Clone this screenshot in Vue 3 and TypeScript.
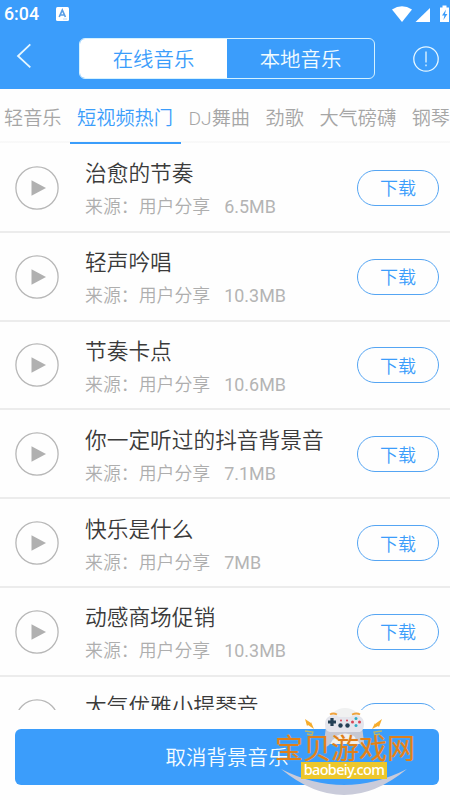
<script setup lang="ts">
import { ref } from 'vue'

interface Track {
  title: string
  size: string
}

const categories: string[] = ['轻音乐', '短视频热门', 'DJ舞曲', '劲歌', '大气磅礴', '钢琴']
const activeCategory = ref('短视频热门')
const source = ref<'online' | 'local'>('online')

const tracks: Track[] = [
  { title: '治愈的节奏', size: '6.5MB' },
  { title: '轻声吟唱', size: '10.3MB' },
  { title: '节奏卡点', size: '10.6MB' },
  { title: '你一定听过的抖音背景音', size: '7.1MB' },
  { title: '快乐是什么', size: '7MB' },
  { title: '动感商场促销', size: '10.3MB' },
  { title: '大气优雅小提琴音', size: '' },
]
</script>

<template>
  <div class="screen">
    <header class="header">
      <div class="status">
        <span class="clock">6:04</span>
        <svg class="badge" viewBox="0 0 13 14">
          <rect width="13" height="14" rx="1.5" fill="#fff" />
          <path d="M3.2 10 6.3 3 9.4 10M4.3 8h4" fill="none" stroke="#5b9fe6" stroke-width="1.7" />
          <path d="M7 12h4" stroke="#b6d8fa" />
        </svg>
        <svg class="signals" viewBox="0 0 60 20">
          <path d="M2 4.5Q12 -2 22 4.5L12 17Z" fill="#fff" />
          <path d="M25.5 17 40 3V17Z" fill="#fff" />
          <path d="M50 2.5h2.5V.5h4v2H59V17H50Z" fill="#fff" />
          <path d="m56 4.5-4 6h2.4l-1 4.5 4-6H55Z" fill="#3b9dfb" />
        </svg>
      </div>
      <div class="nav">
        <svg class="back" viewBox="0 0 16 26"><path d="M14.3 1.4 2 13l12.3 11.4" /></svg>
        <div class="switcher">
          <button :class="{ on: source === 'online' }" @click="source = 'online'">在线音乐</button>
          <button :class="{ on: source === 'local' }" @click="source = 'local'">本地音乐</button>
        </div>
        <svg class="info" viewBox="0 0 28 28">
          <circle cx="14" cy="14" r="12.2" />
          <path d="M14 6.5v11M14 19.5v1.8" />
        </svg>
      </div>
    </header>

    <nav class="tabs">
      <button
        v-for="name in categories"
        :key="name"
        :class="{ active: name === activeCategory }"
        @click="activeCategory = name"
      >{{ name }}</button>
    </nav>

    <main class="list">
      <article v-for="track in tracks" :key="track.title" class="track">
        <svg class="play" viewBox="0 0 44 44">
          <circle cx="22" cy="22" r="21.1" />
          <path d="M16.5 14.3 31 22 16.5 29.7Z" />
        </svg>
        <div class="meta">
          <h3>{{ track.title }}</h3>
          <p><template v-if="track.size"><span>来源：用户分享</span><span class="size">{{ track.size }}</span></template></p>
        </div>
        <button class="download"><template v-if="track.size">下载</template></button>
      </article>
    </main>

    <footer class="footer">
      <button class="cancel">取消背景音乐</button>
    </footer>

    <div class="watermark">
      <svg class="mascot" viewBox="0 0 150 94">
        <circle cx="75" cy="19" r="17" fill="#f0f1f1" />
        <path d="M11 63Q74 95 137 63Q74 115 11 63Z" fill="#c9cbda" />
        <path d="M56 20 54 37Q55 44 60 38L66 30Q75 25 84 30L90 38Q95 44 94 36L92 20Z" fill="#c6c8d3" />
        <path d="M60 38Q64 29 75 29Q86 29 90 38Z" fill="#f0f1f1" />
        <path d="M60 10Q65 8 69 11H80Q84 8 89 10Q94 12 94 18Q94 24 90 26H60Q55 25 55 18Q55 12 60 10Z" fill="#e4e5ec" />
        <path d="M60 8.5Q63 6.5 67 8.5M82 8.5Q87 6.5 90 8.5" stroke="#efa33d" stroke-width="1.8" fill="none" />
        <path d="M62 12v8M58 16h8" stroke="#234055" stroke-width="3.2" />
        <g fill="#234055"><circle cx="70.5" cy="19.5" r="2.2" /><circle cx="77.5" cy="19.5" r="2.2" /></g>
        <g fill="#d84555"><circle cx="82.5" cy="16" r="1.5" /><circle cx="89.5" cy="16" r="1.5" /><circle cx="71" cy="14.5" r="1" /><circle cx="77" cy="14.5" r="1" /></g>
        <g fill="#2eabc5"><circle cx="86" cy="12.5" r="1.5" /><circle cx="86" cy="19.5" r="1.5" /></g>
        <path d="m35 13 6 4v-1l3 7-6-4-1 1ZM112 13l-7 5v-1l-3 6 6-3 1 1Z" fill="#f6ad2d" />
        <path d="m35 25 8 1-1 3-5-1M112 25l-8 1 1 3 5-1" fill="none" stroke="#bdb866" stroke-width="1.3" />
      </svg>
      <span class="site-name">宝贝游戏网</span>
      <span class="site-url">baobeiy.com</span>
    </div>
  </div>
</template>

<style>
body {
  margin: 0;
  overflow: hidden;
}
</style>

<style scoped>
.screen {
  position: relative;
  display: flex;
  flex-direction: column;
  width: 450px;
  height: 800px;
  overflow: hidden;
  background: #fefefe;
  font-family: Roboto, 'Noto Sans CJK SC', sans-serif;
  font-weight: 350;
}
button {
  padding: 0;
  border: 0;
  background: none;
  font-family: inherit;
  font-weight: inherit;
  white-space: nowrap;
}
.header {
  flex: 0 0 89px;
  background: #3b9dfb;
}
.status {
  display: flex;
  align-items: center;
  height: 28px;
  padding-left: 4px;
}
.clock {
  width: 52px;
  color: #fff;
  font-size: 17.8px;
  font-weight: 500;
  line-height: 28px;
}
.badge {
  width: 13px;
  height: 14px;
}
.signals {
  width: 60px;
  height: 20px;
  margin: 0 0 0 auto;
  transform: translateY(1px);
}
.nav {
  display: flex;
  align-items: center;
  height: 61px;
  padding: 0 10px 0 16px;
}
.back {
  width: 16px;
  height: 26px;
  margin-bottom: 5px;
}
.back path,
.info circle,
.info path {
  fill: none;
  stroke: #e6f7ff;
  stroke-width: 1.3;
}
.back path {
  stroke-width: 1.8;
}
.switcher {
  display: flex;
  box-sizing: border-box;
  width: 296px;
  height: 41px;
  margin-left: 47px;
  overflow: hidden;
  border: 1.5px solid #d5f2ff;
  border-radius: 6px;
}
.switcher button {
  flex: 1;
  padding-top: 3px;
  color: #f0fbff;
  font-size: 20.4px;
  line-height: 36px;
}
.switcher .on {
  color: #3b9dfb;
  background: #fff;
}
.info {
  width: 28px;
  height: 28px;
  margin-left: auto;
}
.tabs {
  display: flex;
  flex: 0 0 55px;
  box-sizing: border-box;
  width: 520px;
  padding-left: 4px;
  background: linear-gradient(#fefefe 0 52px, #f3f3f3 53px, #fefefe 54px);
}
.tabs button {
  position: relative;
  margin-right: 15.5px;
  padding-top: 4px;
  color: #a6a6a6;
  font-size: 19.2px;
  line-height: 51px;
}
.tabs .active {
  color: #3b9dfb;
}
.tabs .active::after {
  position: absolute;
  right: -8px;
  bottom: 0;
  left: -7.5px;
  height: 2px;
  background: #3b9dfb;
  content: '';
}
.list {
  flex: 0 0 566px;
  overflow: hidden;
}
.track {
  display: flex;
  align-items: center;
  box-sizing: border-box;
  height: 88.8px;
  padding: 1px 11px 0 15px;
  border-bottom: 2px solid #ececec;
}
.play {
  width: 44px;
  height: 44px;
}
.play circle {
  fill: none;
  stroke: #b7b7b7;
  stroke-width: 1.3;
}
.play path {
  fill: #b0b0b0;
}
.meta {
  flex: 1;
  margin-left: 26px;
  padding-top: 5px;
}
h3 {
  margin: 0;
  color: #3a3a3a;
  font-size: 21.7px;
  font-weight: inherit;
  line-height: 34px;
  white-space: nowrap;
}
p {
  display: flex;
  gap: 14px;
  height: 32px;
  margin: 0;
  color: #aeaeae;
  font-size: 17.9px;
  line-height: 32px;
}
.size {
  color: #b4b4b4;
  font-weight: 400;
}
.download {
  box-sizing: border-box;
  width: 82px;
  height: 36px;
  padding-top: 2px;
  border: 1.5px solid #55a5f3;
  border-radius: 18px;
  color: #3b9dfb;
  font-size: 18px;
  line-height: 31px;
}
.footer {
  flex: 1;
  padding: 19px 11px 0 15px;
}
.cancel {
  display: block;
  width: 424px;
  height: 56px;
  padding-top: 2px;
  border-radius: 6px;
  color: #f5fcff;
  background: #3b9dfb;
  font-size: 20.5px;
  line-height: 54px;
}
.watermark {
  position: absolute;
  top: 706px;
  left: 270px;
  width: 150px;
  height: 94px;
}
.mascot {
  position: absolute;
  inset: 0;
  width: 150px;
  height: 94px;
}
.site-name {
  position: absolute;
  top: 26px;
  left: 5px;
  color: #e07f18;
  font-size: 28px;
  font-weight: 400;
  line-height: 36px;
  white-space: nowrap;
  text-shadow: 0 0 1px #f3c58f;
}
.site-url {
  position: absolute;
  top: 56px;
  left: 31px;
  width: 86px;
  height: 17px;
  color: #fff;
  background: #edc72b;
  font-family: 'Noto Sans', sans-serif;
  font-size: 14.5px;
  font-weight: 500;
  letter-spacing: -0.7px;
  line-height: 15px;
  text-align: center;
  white-space: nowrap;
}
</style>
